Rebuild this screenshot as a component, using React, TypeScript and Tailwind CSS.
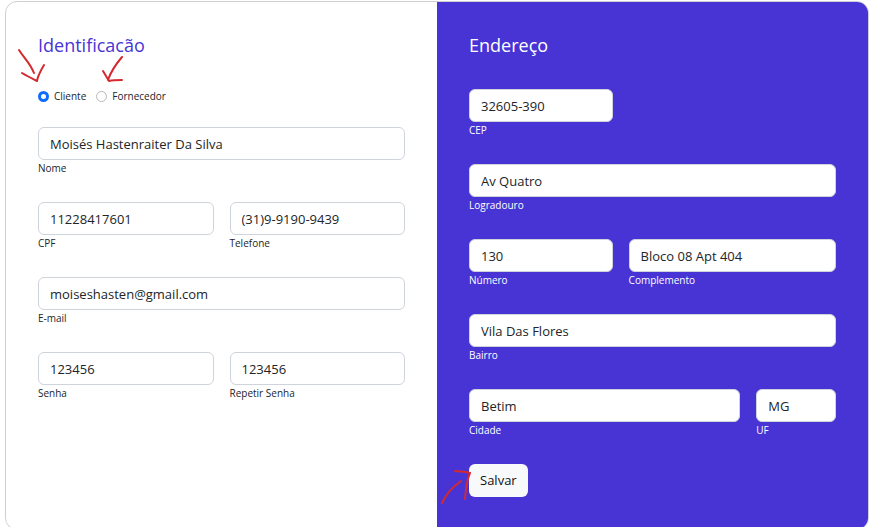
import { useId } from "react";

type FieldProps = { label: string; value: string; span: string; type?: string };

function Field({ label, value, span, type = "text" }: FieldProps) {
  const id = useId();
  return (
    <div className={span}>
      <input
        id={id}
        type={type}
        defaultValue={value}
        className="block h-[33px] w-full rounded-md border border-[#ced4da] bg-white px-[11px] text-[13px] text-[#212529] outline-none focus:border-[#86b7fe]"
      />
      <label htmlFor={id} className="block h-[18px] text-[10px] leading-4">
        {label}
      </label>
    </div>
  );
}

function Radio({ label, checked }: { label: string; checked?: boolean }) {
  const id = useId();
  return (
    <div className="flex items-center gap-[5px]">
      <input
        id={id}
        type="radio"
        name="tipo"
        defaultChecked={checked}
        className="size-[11px] appearance-none rounded-full border border-[#b5b9bd] bg-white checked:border-[3px] checked:border-[#0d6efd]"
      />
      <label htmlFor={id} className="text-[10px] leading-4">
        {label}
      </label>
    </div>
  );
}

function Arrow({ className, viewBox, d }: { className: string; viewBox: string; d: string }) {
  return (
    <svg
      aria-hidden="true"
      viewBox={viewBox}
      className={className}
      fill="none"
      stroke="#d42a2e"
      strokeWidth="2"
      strokeLinecap="round"
      strokeLinejoin="round"
    >
      <path d={d} />
    </svg>
  );
}

export default function App() {
  return (
    <main className="bg-white pt-px pr-px pl-[5px] font-['Open_Sans',sans-serif] text-[#212529]">
      <form
        onSubmit={(e) => e.preventDefault()}
        className="grid grid-cols-2 overflow-hidden rounded-xl border border-[#ced0d2]"
      >
        <section className="px-8 pt-[31px]">
          <h1 className="text-lg leading-6 text-[#4835d4]">Identificacão</h1>
          <div className="relative mt-[31px] flex gap-[10px]">
            <Radio label="Cliente" checked />
            <Radio label="Fornecedor" />
            <Arrow
              className="pointer-events-none absolute -top-10 -left-5 h-9 w-7"
              viewBox="18 48 28 36"
              d="M19 50C24 58 30 63 34 73M22 73C27 76 31 78 37 81C38 75 41 70 44 65"
            />
            <Arrow
              className="pointer-events-none absolute -top-8 left-16 h-7 w-6"
              viewBox="102 56 24 28"
              d="M122 57C116 64 111 71 108 80M103 71L109 81C113 80 117 80 122 80"
            />
          </div>
          <div className="mt-[23px] grid grid-cols-12 gap-x-4 gap-y-6">
            <Field label="Nome" value="Moisés Hastenraiter Da Silva" span="col-span-12" />
            <Field label="CPF" value="11228417601" span="col-span-6" />
            <Field label="Telefone" value="(31)9-9190-9439" span="col-span-6" type="tel" />
            <Field label="E-mail" value="moiseshasten@gmail.com" span="col-span-12" type="email" />
            <Field label="Senha" value="123456" span="col-span-6" />
            <Field label="Repetir Senha" value="123456" span="col-span-6" />
          </div>
        </section>

        <section className="bg-[#4834d4] px-8 pt-[31px] pb-8 text-white">
          <h2 className="text-lg leading-6">Endereço</h2>
          <div className="mt-8 grid grid-cols-12 gap-x-4 gap-y-6">
            <Field label="CEP" value="32605-390" span="col-span-5" />
            <Field label="Logradouro" value="Av Quatro" span="col-span-12" />
            <Field label="Número" value="130" span="col-span-5" />
            <Field label="Complemento" value="Bloco 08 Apt 404" span="col-span-7" />
            <Field label="Bairro" value="Vila Das Flores" span="col-span-12" />
            <Field label="Cidade" value="Betim" span="col-span-9" />
            <Field label="UF" value="MG" span="col-span-3" />
          </div>
          <div className="relative mt-6 w-fit">
            <button
              type="submit"
              className="block h-[33px] rounded-md bg-[#f8f9fa] px-[11px] text-[13px] text-[#111]"
            >
              Salvar
            </button>
            <Arrow
              className="pointer-events-none absolute top-1 -left-7 h-9 w-8"
              viewBox="441 468 32 36"
              d="M442 503C446 494 454 486 461 481M455 471C460 472 465 471 470 473C466 482 466 490 465 499"
            />
          </div>
        </section>
      </form>
    </main>
  );
}
